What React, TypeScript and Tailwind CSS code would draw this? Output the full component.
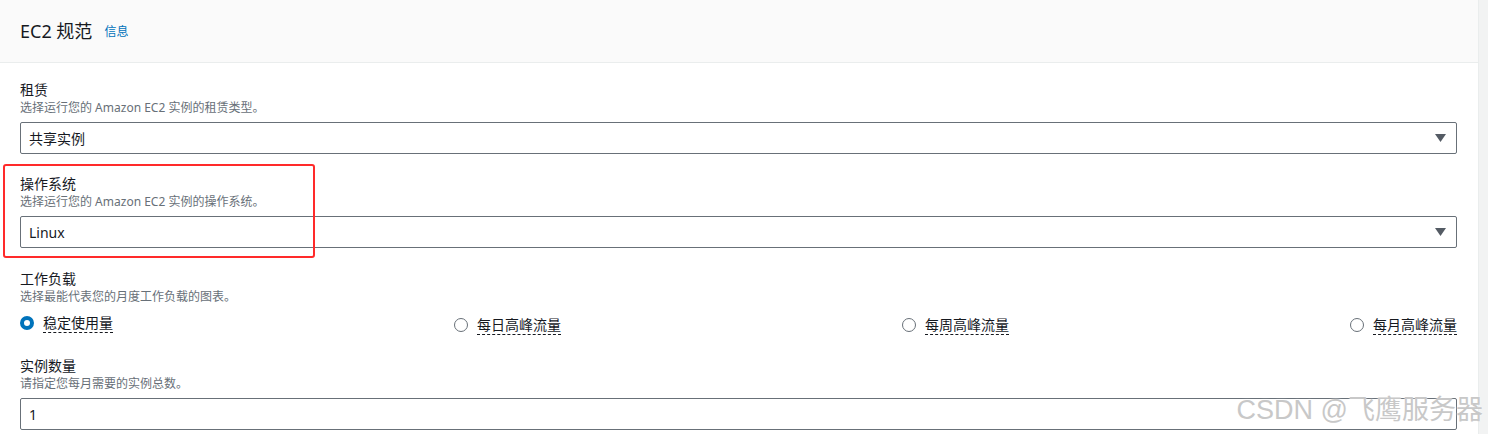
import React from 'react'

const font = { fontFamily: '"Noto Sans", "Noto Sans CJK SC", sans-serif' }

const label = "block text-[14px] leading-[20px] text-[#16191f]"
const desc = "block text-[12px] leading-[16px] text-[#687078]"
const box = "mt-[6px] h-[32px] w-full flex items-center pl-[8px] pr-[10px] border border-[#687078] rounded-[2px] bg-white text-[14px] text-[#16191f]"

function Caret() {
  return (
    <svg width="11" height="8" viewBox="0 0 11 8" className="ml-auto">
      <path d="M0 0h11L5.5 8z" fill="#545b64" />
    </svg>
  )
}

function Field({ title, hint, value, select, className = '' }: { title: string; hint: string; value: string; select?: boolean; className?: string }) {
  return (
    <div className={className}>
      <span className={label}>{title}</span>
      <span className={desc}>{hint}</span>
      <div className={box}>
        <span>{value}</span>
        {select && <Caret />}
      </div>
    </div>
  )
}

function Radio({ text, checked }: { text: string; checked?: boolean }) {
  return (
    <label className={`flex items-center gap-[9px] ${checked ? '-mt-[4px]' : ''}`}>
      {checked ? (
        <span className="w-[14px] h-[14px] rounded-full border-[4px] border-[#0073bb] bg-white" />
      ) : (
        <span className="w-[14px] h-[14px] rounded-full border-[1.5px] border-[#687078] bg-white" />
      )}
      <span className="text-[14px] leading-[18px] text-[#16191f] border-b border-dashed border-[#16191f]">{text}</span>
    </label>
  )
}

export default function App() {
  return (
    <div className="relative w-[1488px] h-[434px] overflow-hidden flex bg-white" style={font}>
      <div className="flex-1 flex flex-col">
        <div className="h-[63px] shrink-0 flex items-center gap-[12px] px-5 bg-[#fafafa] border-b border-[#eaeded]">
          <h2 className="text-[18px] text-[#16191f]">EC2 规范</h2>
          <a className="text-[12px] text-[#0073bb] mt-[2px]">信息</a>
        </div>

        <div className="pl-5 pr-[21px] pt-[17px]">
          <Field title="租赁" hint="选择运行您的 Amazon EC2 实例的租赁类型。" value="共享实例" select />
          <Field className="mt-[20px]" title="操作系统" hint="选择运行您的 Amazon EC2 实例的操作系统。" value="Linux" select />

          <div className="mt-[21px]">
            <span className={label}>工作负载</span>
            <span className={desc}>选择最能代表您的月度工作负载的图表。</span>
            <div className="mt-[9px] h-[22px] flex items-center justify-between">
              <Radio text="稳定使用量" checked />
              <Radio text="每日高峰流量" />
              <Radio text="每周高峰流量" />
              <Radio text="每月高峰流量" />
            </div>
          </div>

          <Field className="mt-[20px]" title="实例数量" hint="请指定您每月需要的实例总数。" value="1" />
        </div>
      </div>
      <div className="w-[10px] shrink-0 bg-[#f2f3f3] border-l border-[#eaeded]" />

      {/* annotation box */}
      <div className="absolute left-[3px] top-[164px] w-[312px] h-[94px] border-2 border-[#ff2a2a] rounded-[3px] pointer-events-none" />

      {/* watermark */}
      <div
        className="absolute right-[5px] bottom-[8px] text-[27px] leading-[32px] text-[#c8c8c8] pointer-events-none"
        style={{ fontFamily: '"Liberation Sans", "Noto Sans CJK SC", sans-serif', textShadow: '0 0 2px #fff' }}
      >
        CSDN @飞鹰服务器
      </div>
    </div>
  )
}
